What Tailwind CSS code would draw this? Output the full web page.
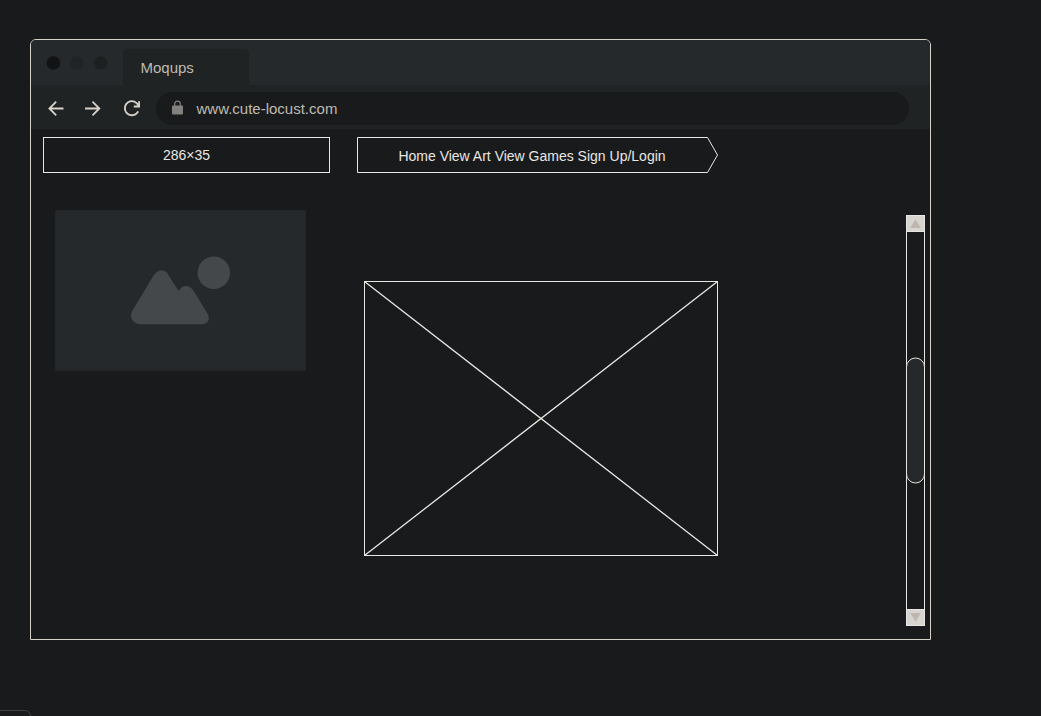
<!DOCTYPE html>
<html lang="en">
<head>
<meta charset="utf-8">
<title>Moqups</title>
<script src="https://cdn.jsdelivr.net/npm/@tailwindcss/browser@4"></script>
</head>
<body class="relative h-[716px] w-[1041px] overflow-hidden bg-[#191a1b] pt-[39px] pl-[30px] font-['Liberation_Sans',Arial,sans-serif]">
<main class="flex h-[601px] w-[901px] flex-col overflow-hidden rounded-t-md border border-[#d6d1c9] bg-[#191a1b]">
  <header class="flex h-[45px] shrink-0 items-start bg-[#25292b]">
    <svg class="mt-[16px] ml-[15px] h-[14px] w-[63px] shrink-0" viewBox="0 0 63 14">
      <circle cx="7.4" cy="7" r="6.8" fill="#121314"/>
      <circle cx="31" cy="7" r="6.8" fill="#202426"/>
      <circle cx="54.7" cy="7" r="6.8" fill="#1c2020"/>
    </svg>
    <div class="mt-[9px] ml-[14px] h-9 w-[126px] rounded-t-[5px] bg-[#1f2323] pl-[17.500px] text-[15px] leading-[38px] text-[#bfbab1]">Moqups</div>
  </header>
  <div class="flex h-11 shrink-0 items-center bg-[#1f2323]">
    <svg class="ml-[13px] h-6 w-[100px] shrink-0" viewBox="0 0 100 24" fill="none" stroke="#d6d1c9" stroke-width="1.8">
      <path d="M19.500 13.500H5.200M12.200 6.700l-6.800 6.800 6.800 6.800"/>
      <path d="M41 13.500H55.500M48.500 6.700l6.800 6.800-6.800 6.800"/>
      <path d="M94.600 11.200A7 7 0 1 0 94.200 16.300"/>
      <path d="M95.100 6.300v5.200h-5.300" stroke-width="1.800"/>
    </svg>
    <div class="ml-[12px] mt-[3px] flex h-[33px] w-[753px] items-center rounded-full bg-[#191a1b]">
      <svg class="-mt-[2px] ml-[16px] h-4 w-[11px]" viewBox="0 0 11 16">
        <rect y="5.500" width="11" height="9" rx="1" fill="#83817d"/>
        <path d="M2.700 6V4a2.800 2.800 0 0 1 5.600 0v2" fill="none" stroke="#83817d" stroke-width="1.200"/>
      </svg>
      <span class="ml-[13.500px] text-[15px] leading-[33px] text-[#bfbab1]">www.cute-locust.com</span>
    </div>
  </div>
  <div class="flex grow pl-3 pt-[8px]">
    <section class="w-[314px] shrink-0">
      <div class="h-9 w-[287px] border border-[#e8e6e3] text-center text-[14px] leading-[34px] text-[#e8e6e3]">286×35</div>
      <svg class="mt-[37px] ml-3 h-[161px] w-[251px]" viewBox="0 0 251 161">
        <rect x=".5" y=".5" width="250" height="160" fill="#25292b" stroke="#222628"/>
        <circle cx="158.800" cy="62.800" r="16.200" fill="#44484a"/>
        <path d="M77.500 100.500 97 68Q101.500 60.300 106.500 60.300T115 67.500L123.700 81Q126.500 76 131 76T139 81.500L152.500 103.500C156 110 152.500 114.300 146.500 114.300H87C78 114.300 73.500 108 77.500 100.500Z" fill="#44484a"/>
      </svg>
    </section>
    <section class="w-[361px] shrink-0">
      <nav class="grid h-9 w-[362px]">
        <svg class="col-start-1 row-start-1" width="362" height="36" viewBox="0 0 362 36" fill="none" stroke="#e8e6e3"><path d="M.5.5H350.500L360.500 18 350.500 35.500H.5Z"/></svg>
        <span class="col-start-1 row-start-1 w-[350px] text-center text-[14px] leading-[38px] text-[#e8e6e3]">Home View Art View Games Sign Up/Login</span>
      </nav>
      <svg class="mt-[108px] ml-[7px] h-[275px] w-[354px]" viewBox="0 0 354 275" fill="none" stroke="#e8e6e3">
        <rect x=".5" y=".5" width="353" height="274"/>
        <path d="M.5.5l353 274M353.500.5.5 274.500" stroke-width="1.300"/>
      </svg>
    </section>
    <svg class="mt-[78px] ml-[188px] h-[411px] w-[19px] shrink-0" viewBox="0 0 19 411" stroke="#e8e6e3">
      <rect x=".5" y=".5" width="18" height="410" fill="none"/>
      <rect x=".5" y=".5" width="18" height="16" fill="#d8d4cf"/>
      <rect x=".5" y="394.500" width="18" height="16" fill="#d8d4cf"/>
      <path d="M4.200 13h10.600L9.500 4.300zM4.200 398h10.600L9.500 406.700z" fill="#bdb7af" stroke="none"/>
      <rect x=".5" y="143" width="18" height="125" rx="9" fill="#25292b"/>
    </svg>
  </div>
</main>
<div class="absolute -left-px top-[710px] h-3 w-8 rounded-tr-md border border-[#3d4143]"></div>
</body>
</html>
